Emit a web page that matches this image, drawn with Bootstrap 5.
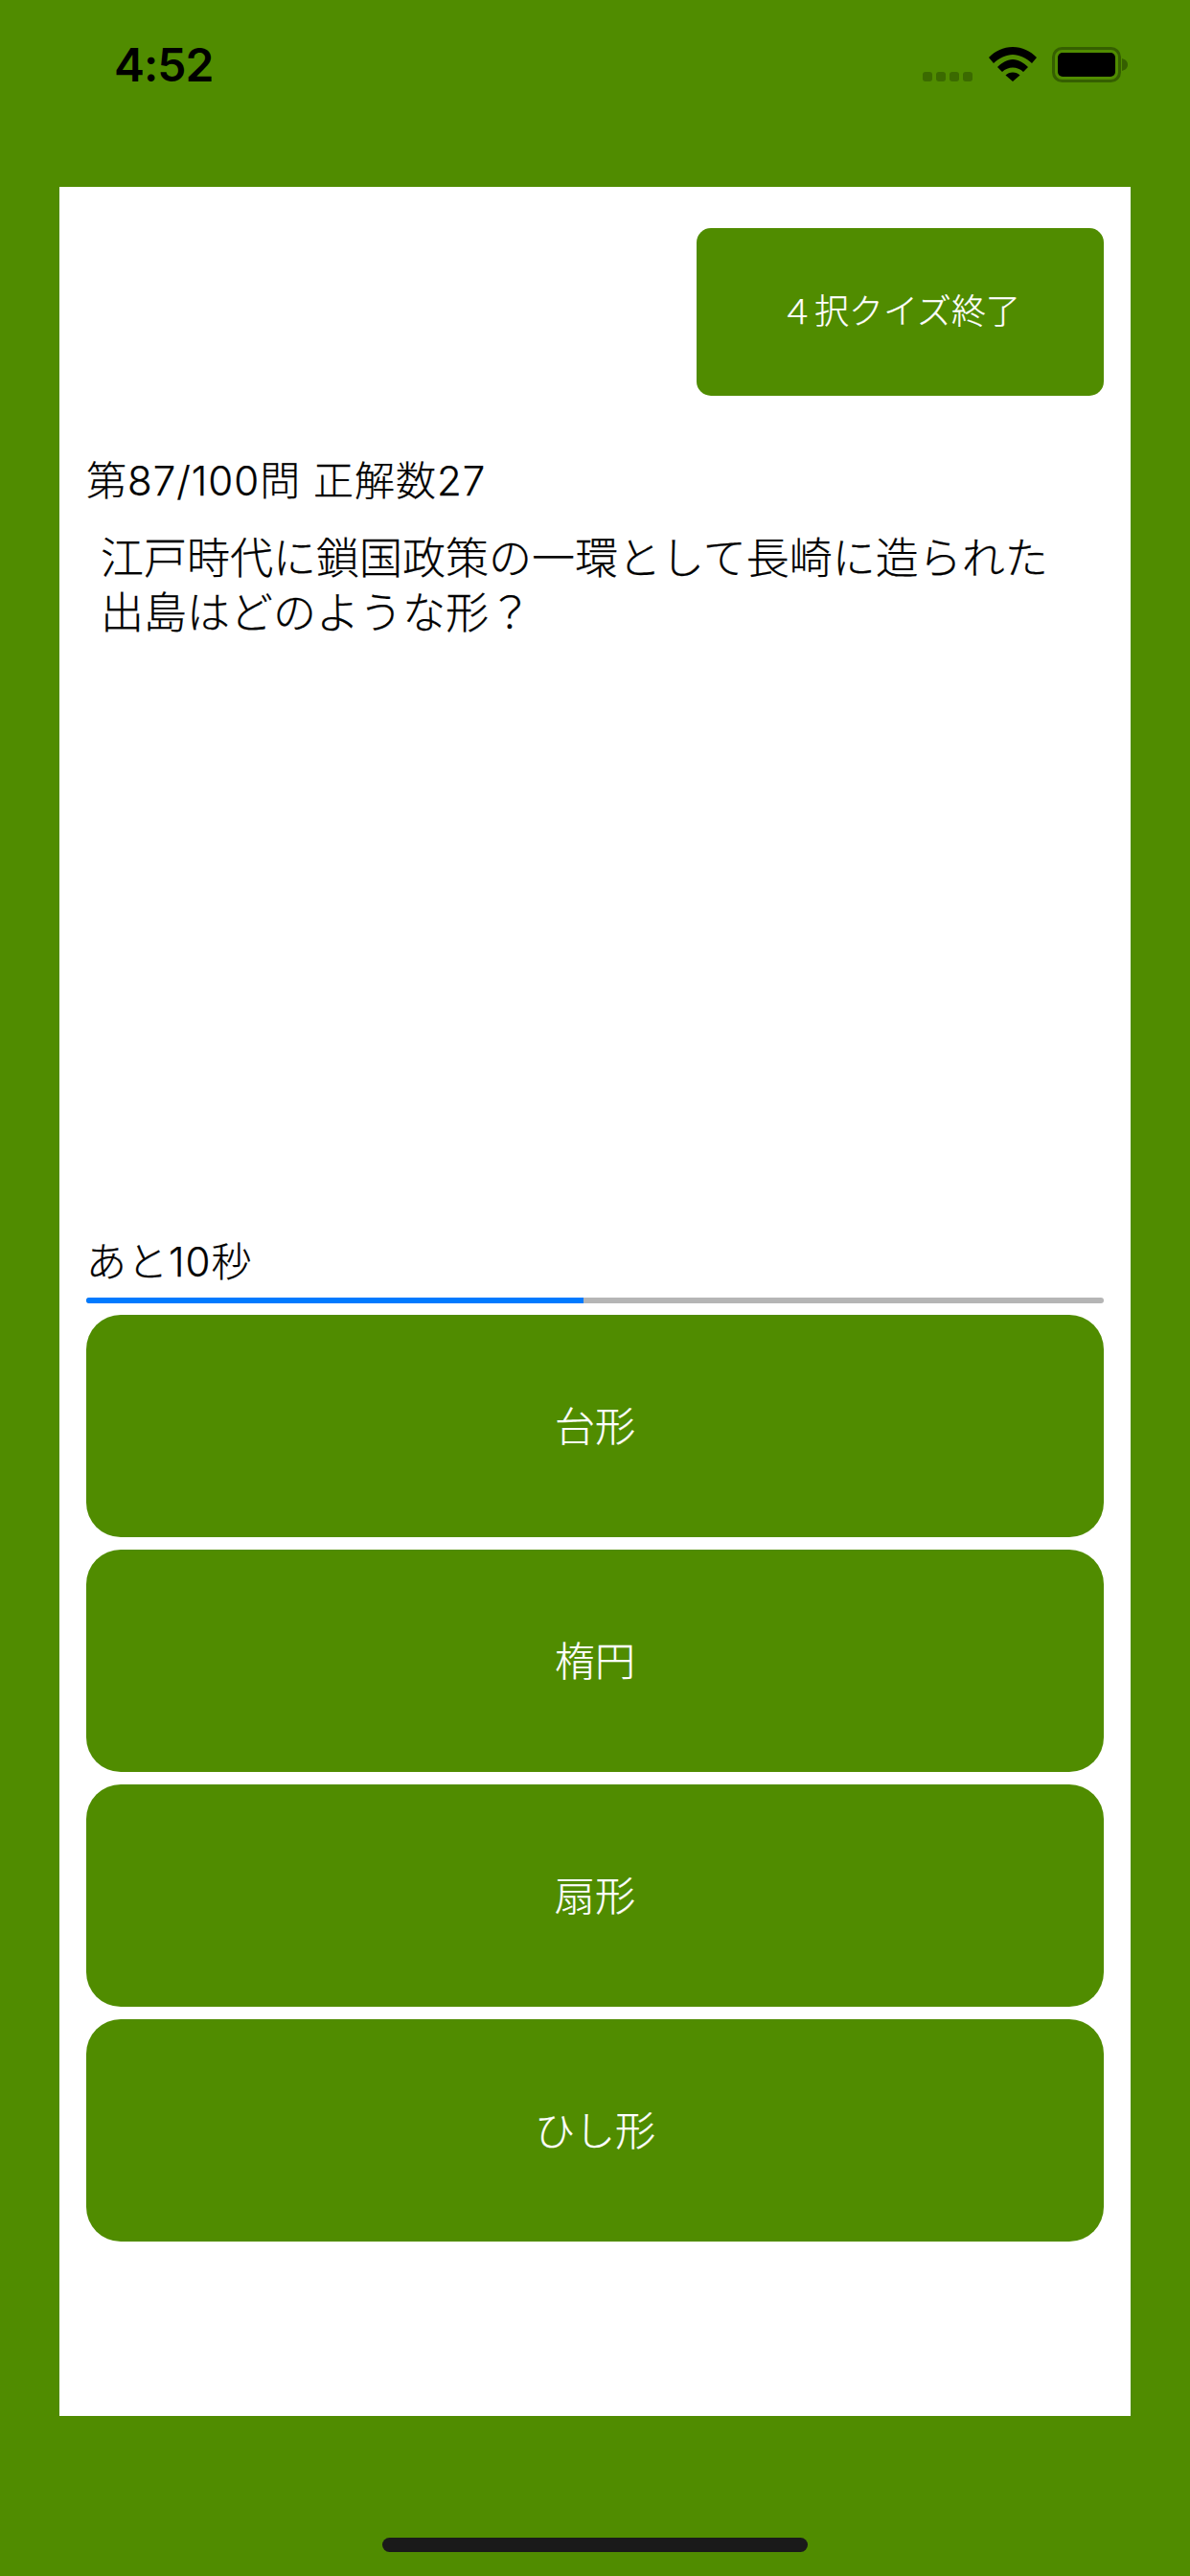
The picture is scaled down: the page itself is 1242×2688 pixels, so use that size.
<!DOCTYPE html>
<html lang="ja">
<head>
  <meta charset="UTF-8" />
  <title>4択クイズ</title>
  <meta name="viewport" content="width=device-width, initial-scale=1.0"/>
  <link rel="stylesheet" href="https://cdn.jsdelivr.net/npm/bootstrap@5.3.0/dist/css/bootstrap.min.css" />
  <style>
    body {
      background: #508c00;
      font-family: "Inter", "Noto Sans CJK JP", sans-serif;
      font-weight: 300;
      color: #000;
      height: 2688px;
      overflow: hidden;
    }

    .status-row {
      height: 195px;
      padding: 49px 65px 0 119px;
    }

    .status-time {
      font-size: 48px;
      font-weight: 600;
      letter-spacing: -1px;
      line-height: 38px;
    }

    .signal-dots {
      margin-top: 26px;
      margin-right: 17px;
    }

    .signal-dots i {
      width: 10px;
      height: 10px;
      border-radius: 3px;
      background: #3b6a00;
    }

    .quiz-panel {
      background: #fff;
      margin: 0 62px;
      height: 2326px;
      padding: 43px 28px 182px;
    }

    .quiz-btn {
      background: #508c00;
      border: 0;
      color: #fff;
      font-weight: 300;
      -webkit-text-stroke: 0.25px;
    }

    .quit-btn {
      width: 425px;
      height: 175px;
      padding-bottom: 8px;
      font-size: 36px;
      border-radius: 15px;
    }

    .info-text {
      font-size: 42px;
      letter-spacing: 1px;
      line-height: 56px;
      -webkit-text-stroke: 0.25px;
    }

    .score-line {
      margin-top: 61px;
    }

    .question-text {
      margin-top: 24px;
      padding-left: 15px;
      font-size: 45px;
      line-height: 57px;
      -webkit-text-stroke: 0.25px;
    }

    .time-bar {
      height: 6px;
      margin-top: 9px;
      margin-bottom: 12px;
      background: #b5b5b5;
      border-radius: 3px;
    }

    .time-bar .progress-bar {
      background: #007aff;
    }

    .quiz-choices {
      gap: 13px;
    }

    .choice-btn {
      height: 232px;
      font-size: 42px;
      border-radius: 36px;
    }

    .home-bar {
      width: 444px;
      height: 15px;
      margin: 127px auto 0;
      background: #1a1a1a;
      border-radius: 8px;
    }
  </style>
</head>
<body>
  <div class="status-row d-flex align-items-start">
    <div class="status-time flex-grow-1">4:52</div>
    <div class="signal-dots d-flex gap-1"><i class="d-block"></i><i class="d-block"></i><i class="d-block"></i><i class="d-block"></i></div>
    <svg width="50" height="36" viewBox="0 0 50 36">
      <path d="M0 11C7 4 15 0 25 0S43 4 50 11L45 17C39 11.500 32 8 25 8S11 11.500 5 17Z"/>
      <path d="M9 21C13 17 19 13 25 13S37 17 41 21L36 26C33 23 29 21.500 25 21.500S17 23 14 26Z"/>
      <path d="M17.500 29.500C19.500 27.500 22 26.500 25 26.500S30.500 27.500 32.500 29.500L25 36Z"/>
    </svg>
    <svg class="ms-3" width="79" height="37" viewBox="0 0 79 37">
      <rect x="1.500" y="1.500" width="69" height="34" rx="9" fill="none" stroke="#355f00" stroke-width="3"/>
      <rect x="6" y="6" width="60" height="25" rx="5"/>
      <path d="M73 12C76.500 13 79 15 79 18.500S76.500 24 73 25Z" fill="#355f00"/>
    </svg>
  </div>

  <div class="quiz-panel d-flex flex-column">
    <div class="d-flex justify-content-end">
      <button type="button" class="btn quiz-btn quit-btn">４択クイズ終了</button>
    </div>
    <div class="info-text score-line">第87/100問 正解数27</div>
    <div class="question-text flex-grow-1">江戸時代に鎖国政策の一環として長崎に造られた<br>出島はどのような形？</div>
    <div class="info-text">あと10秒</div>
    <div class="progress time-bar">
      <div class="progress-bar" style="width: 48.9%"></div>
    </div>
    <div class="d-flex flex-column quiz-choices">
      <button type="button" class="btn quiz-btn choice-btn">台形</button>
      <button type="button" class="btn quiz-btn choice-btn">楕円</button>
      <button type="button" class="btn quiz-btn choice-btn">扇形</button>
      <button type="button" class="btn quiz-btn choice-btn">ひし形</button>
    </div>
  </div>

  <div class="home-bar"></div>

  <script src="https://cdn.jsdelivr.net/npm/bootstrap@5.3.0/dist/js/bootstrap.bundle.min.js"></script>
</body>
</html>
